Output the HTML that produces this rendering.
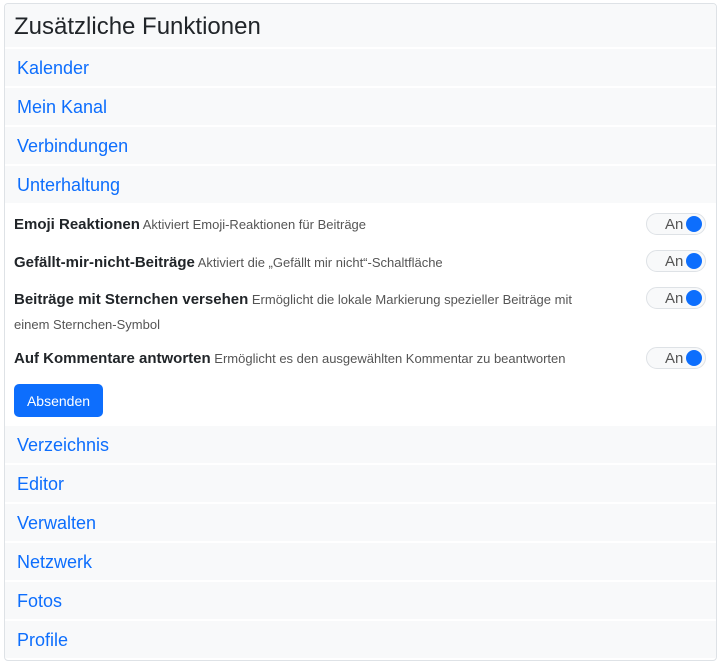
<!DOCTYPE html>
<html><head><meta charset="utf-8"><style>
body{margin:0;background:#fff;font-family:"Liberation Sans",sans-serif;}
.card{position:absolute;left:4px;top:3px;width:711px;height:656px;border:1px solid #dee2e6;border-radius:4px;background:#fff;overflow:hidden}
.hd{height:43px;background:#f8f9fa;font-size:24px;color:#212529;padding-left:9px;line-height:46px}
.row{height:37px;background:#f8f9fa;margin-top:2px;color:#0d6efd;font-size:18px;line-height:38px;padding-left:12px}
.sec{position:relative;height:219px;margin-top:2px}
.it{position:absolute;left:9px;font-size:13px;color:#555;line-height:25px;width:585px}
.it b{font-size:15px;color:#212529}
.tg{position:absolute;left:641px;width:58px;height:20px;border:1px solid #dee2e6;border-radius:11px;background:#f8f9fa}
.tg span{position:absolute;left:18px;top:2px;font-size:15px;color:#555}
.tg i{position:absolute;right:3px;top:2px;width:16px;height:16px;border-radius:50%;background:#0d6efd}
.btn{position:absolute;left:9px;top:179px;width:89px;height:33px;background:#0d6efd;color:#fff;border-radius:5px;font-size:14px;line-height:34px;text-align:center}
</style></head><body><div class="card">
<div class="hd">Zusätzliche Funktionen</div>
<div class="row">Kalender</div><div class="row">Mein Kanal</div><div class="row">Verbindungen</div><div class="row">Unterhaltung</div>
<div class="sec">
<div class="it" style="top:7px"><b>Emoji Reaktionen</b> Aktiviert Emoji-Reaktionen für Beiträge</div><div class="tg" style="top:8px"><span>An</span><i></i></div>
<div class="it" style="top:45px"><b>Gefällt-mir-nicht-Beiträge</b> Aktiviert die „Gefällt mir nicht“-Schaltfläche</div><div class="tg" style="top:45px"><span>An</span><i></i></div>
<div class="it" style="top:82px"><b>Beiträge mit Sternchen versehen</b> Ermöglicht die lokale Markierung spezieller Beiträge mit einem Sternchen-Symbol</div><div class="tg" style="top:82px"><span>An</span><i></i></div>
<div class="it" style="top:141px"><b>Auf Kommentare antworten</b> Ermöglicht es den ausgewählten Kommentar zu beantworten</div><div class="tg" style="top:142px"><span>An</span><i></i></div>
<div class="btn">Absenden</div>
</div>
<div class="row">Verzeichnis</div><div class="row">Editor</div><div class="row">Verwalten</div><div class="row">Netzwerk</div><div class="row">Fotos</div><div class="row">Profile</div>
</div></body></html>
